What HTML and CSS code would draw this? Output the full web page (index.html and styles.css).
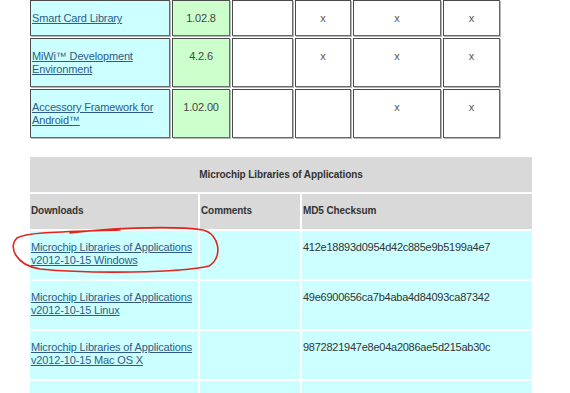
FILE: index.html
```html
<!DOCTYPE html>
<html>
<head>
<meta charset="utf-8">
<link rel="stylesheet" href="styles.css">
</head>
<body>
<div class="page">
  <table class="libs">
    <tr>
      <td class="name"><a href="#">Smart Card Library</a></td>
      <td class="ver">1.02.8</td>
      <td class="c3"></td>
      <td class="c4">x</td>
      <td class="c5">x</td>
      <td class="c6">x</td>
    </tr>
    <tr>
      <td class="name"><a href="#">MiWi™ Development Environment</a></td>
      <td class="ver">4.2.6</td>
      <td class="c3"></td>
      <td class="c4">x</td>
      <td class="c5">x</td>
      <td class="c6">x</td>
    </tr>
    <tr>
      <td class="name"><a href="#">Accessory Framework for Android™</a></td>
      <td class="ver">1.02.00</td>
      <td class="c3"></td>
      <td class="c4"></td>
      <td class="c5">x</td>
      <td class="c6">x</td>
    </tr>
  </table>

  <div class="dl-wrap">
    <table class="dl">
      <tr class="title">
        <th colspan="3">Microchip Libraries of Applications</th>
      </tr>
      <tr class="heads">
        <th class="h-dl">Downloads</th>
        <th class="h-cm">Comments</th>
        <th class="h-md">MD5 Checksum</th>
      </tr>
      <tr>
        <td><a href="#">Microchip Libraries of Applications v2012-10-15 Windows</a></td>
        <td></td>
        <td class="md5">412e18893d0954d42c885e9b5199a4e7</td>
      </tr>
      <tr>
        <td><a href="#">Microchip Libraries of Applications v2012-10-15 Linux</a></td>
        <td></td>
        <td class="md5">49e6900656ca7b4aba4d84093ca87342</td>
      </tr>
      <tr>
        <td><a href="#">Microchip Libraries of Applications v2012-10-15 Mac OS X</a></td>
        <td></td>
        <td class="md5">9872821947e8e04a2086ae5d215ab30c</td>
      </tr>
      <tr>
        <td></td>
        <td></td>
        <td></td>
      </tr>
    </table>
    <svg class="circle" width="240" height="60" viewBox="0 225 240 60">
      <path d="M 70 237 C 100 233, 170 229, 203 234 C 220 238, 223 262, 209 270 C 180 277, 90 278, 40 273 C 15 269, 8 250, 17 242 C 27 236, 60 236, 120 234" fill="none" stroke="#e3241c" stroke-width="1.6" stroke-linecap="round"/>
    </svg>
  </div>
</div>
</body>
</html>
```

FILE: styles.css
```css
html, body {
  margin: 0;
  padding: 0;
  background: #ffffff;
}

body {
  font-family: "Liberation Sans", Arial, sans-serif;
  font-size: 11px;
  line-height: 13px;
  letter-spacing: -0.15px;
  color: #333333;
}

a {
  color: #2e5c88;
  text-decoration: underline;
}

.page {
  margin-top: -1px;
  padding-left: 28px;
}

.libs {
  border-collapse: separate;
  border-spacing: 2px;
  margin: 0;
  margin-top: -2px;
}

.libs td {
  box-sizing: border-box;
  vertical-align: top;
  padding: 11px 2px 10px 2px;
  border: 1px solid #4a4a4a;
  border-right-color: #6a6a6a;
  border-bottom-color: #6a6a6a;
  box-shadow: 1px 1px 0 #b5b5b5;
  background: #ffffff;
  color: #555555;
}

.libs .name {
  width: 140px;
  background: #ccffff;
  padding-left: 1px;
}

.libs .ver {
  width: 58px;
  background: #ccffcc;
  text-align: center;
  color: #444444;
}

.libs .c3 { width: 61px; }
.libs .c4 { width: 56px; text-align: center; }
.libs .c5 { width: 88px; text-align: center; }
.libs .c6 { width: 57px; text-align: center; }

.dl-wrap {
  position: relative;
  margin-top: 15px;
}

.dl {
  border-collapse: separate;
  border-spacing: 2px;
  margin: 0;
}

.dl th {
  background: #d9d9d9;
  color: #333333;
  font-size: 10px;
  letter-spacing: -0.1px;
  font-weight: bold;
  text-align: left;
  vertical-align: middle;
  padding: 0 1px;
}

.dl .title th {
  height: 35px;
  text-align: center;
}

.dl .heads th {
  height: 35px;
  padding-bottom: 2px;
}

.dl .h-dl { width: 168px; box-sizing: border-box; }
.dl .h-cm { width: 100px; box-sizing: border-box; }
.dl .h-md { width: 230px; box-sizing: border-box; }

.dl td {
  background: #ccffff;
  vertical-align: top;
  height: 48px;
  box-sizing: border-box;
  padding: 10px 1px 0 1px;
  color: #333333;
}

.dl .md5 {
  letter-spacing: -0.25px;
}

.circle {
  position: absolute;
  left: -28px;
  top: -1px;
  margin-top: 67px;
  pointer-events: none;
}
```
